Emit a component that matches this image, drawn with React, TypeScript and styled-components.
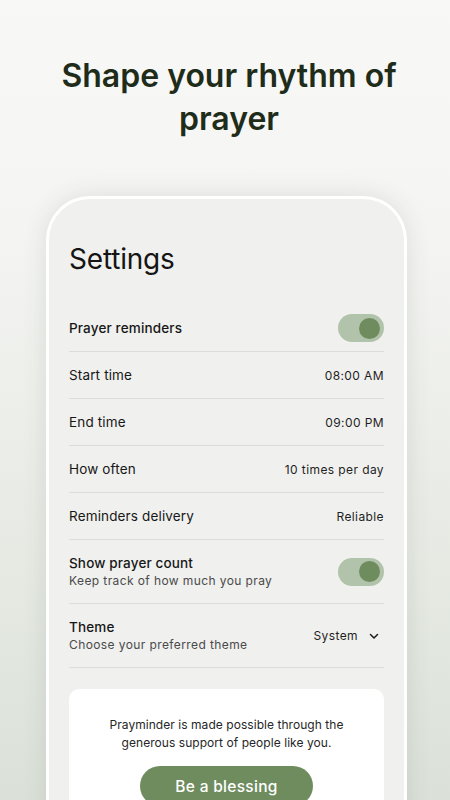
import React from "react";
import styled, { createGlobalStyle } from "styled-components";

const GlobalStyle = createGlobalStyle`
  html, body {
    margin: 0;
    padding: 0;
  }
  body {
    font-family: Inter, "Noto Sans", sans-serif;
    -webkit-font-smoothing: antialiased;
  }
`;

type Row = {
  label: string;
  hint?: string;
  value?: string;
  toggle?: boolean;
  select?: boolean;
  strong?: boolean;
};

const rows: Row[] = [
  { label: "Prayer reminders", toggle: true, strong: true },
  { label: "Start time", value: "08:00 AM" },
  { label: "End time", value: "09:00 PM" },
  { label: "How often", value: "10 times per day" },
  { label: "Reminders delivery", value: "Reliable" },
  {
    label: "Show prayer count",
    hint: "Keep track of how much you pray",
    toggle: true,
    strong: true,
  },
  {
    label: "Theme",
    hint: "Choose your preferred theme",
    value: "System",
    select: true,
    strong: true,
  },
];

const Chevron = () => (
  <svg width="12" height="12" viewBox="0 0 24 24" fill="none">
    <path
      d="M5 9l7 7 7-7"
      stroke="#1c1c1c"
      strokeWidth="3"
      strokeLinecap="round"
      strokeLinejoin="round"
    />
  </svg>
);

const App = () => {
  return (
    <>
      <GlobalStyle />
      <Page>
        <Headline>Shape your rhythm of prayer</Headline>
        <Phone>
          <Title>Settings</Title>
          <List>
            {rows.map((r) => (
              <SettingRow key={r.label} tall={!!r.hint}>
                <Texts>
                  <Label strong={r.strong}>{r.label}</Label>
                  {r.hint && <Hint>{r.hint}</Hint>}
                </Texts>
                {r.toggle && (
                  <Toggle>
                    <Knob />
                  </Toggle>
                )}
                {r.value && (
                  <Value>
                    {r.value}
                    {r.select && <Chevron />}
                  </Value>
                )}
              </SettingRow>
            ))}
          </List>
          <SupportCard>
            <SupportText>
              Prayminder is made possible through the
              <br />
              generous support of people like you.
            </SupportText>
            <BlessButton>Be a blessing</BlessButton>
          </SupportCard>
        </Phone>
      </Page>
    </>
  );
};

export default App;

const Page = styled.div`
  height: 800px;
  overflow: hidden;
  display: flex;
  flex-direction: column;
  align-items: center;
  background: linear-gradient(180deg, #f8f8f7 0%, #f4f4f2 30%, #e6eae3 70%, #dbe1d8 100%);
`;

const Headline = styled.h1`
  margin: 54px 0 0 8px;
  width: 370px;
  text-align: center;
  font-family: Inter, sans-serif;
  font-size: 32px;
  line-height: 43px;
  font-weight: 600;
  letter-spacing: 0;
  color: #1e2c19;
`;

const Phone = styled.div`
  margin: 56px 0 0 3px;
  width: 361px;
  flex: 1;
  box-sizing: border-box;
  background: #f0f0ee;
  border: 3px solid #ffffff;
  border-bottom: none;
  border-radius: 44px 44px 0 0;
  padding: 43px 20px 0;
  box-shadow: 0 0 24px rgba(60, 70, 55, 0.12);
`;

const Title = styled.h2`
  margin: 0;
  font-size: 28px;
  line-height: 34px;
  font-weight: 400;
  color: #151515;
  letter-spacing: -0.2px;
`;

const List = styled.div`
  margin-top: 29px;
  display: flex;
  flex-direction: column;
`;

const SettingRow = styled.div<{ tall: boolean }>`
  height: ${(p) => (p.tall ? 63 : 46)}px;
  display: flex;
  align-items: center;
  justify-content: space-between;
  border-bottom: 1px solid #dcdcda;
`;

const Texts = styled.div`
  display: flex;
  flex-direction: column;
  gap: 1px;
`;

const Label = styled.span<{ strong?: boolean }>`
  font-size: 13.5px;
  line-height: 17px;
  font-weight: ${(p) => (p.strong ? 500 : 400)};
  color: #171717;
  letter-spacing: 0.15px;
`;

const Hint = styled.span`
  font-size: 12px;
  line-height: 16px;
  color: #4a4a4a;
  letter-spacing: 0.4px;
`;

const Value = styled.span`
  display: flex;
  align-items: center;
  gap: 10px;
  font-size: 12px;
  color: #1f1f1f;
  letter-spacing: 0.4px;
  svg {
    margin-right: 4px;
  }
`;

const Toggle = styled.div`
  width: 46px;
  height: 28px;
  border-radius: 14px;
  background: #b1c3aa;
  display: flex;
  align-items: center;
  justify-content: flex-end;
  padding: 0 4px;
  box-sizing: border-box;
`;

const Knob = styled.div`
  width: 21px;
  height: 21px;
  border-radius: 50%;
  background: #6e8c5e;
`;

const SupportCard = styled.div`
  margin-top: 21px;
  background: #ffffff;
  border-radius: 10px;
  padding: 27px 16px 30px;
  display: flex;
  flex-direction: column;
  align-items: center;
`;

const SupportText = styled.p`
  margin: 0;
  text-align: center;
  font-size: 12px;
  line-height: 18px;
  color: #262626;
  letter-spacing: 0.05px;
`;

const BlessButton = styled.button`
  margin-top: 14px;
  width: 173px;
  height: 40px;
  border: none;
  border-radius: 20px;
  background: #6f8c5f;
  color: #ffffff;
  font-family: Inter, sans-serif;
  font-size: 15.5px;
  font-weight: 500;
  letter-spacing: 0.3px;
`;
